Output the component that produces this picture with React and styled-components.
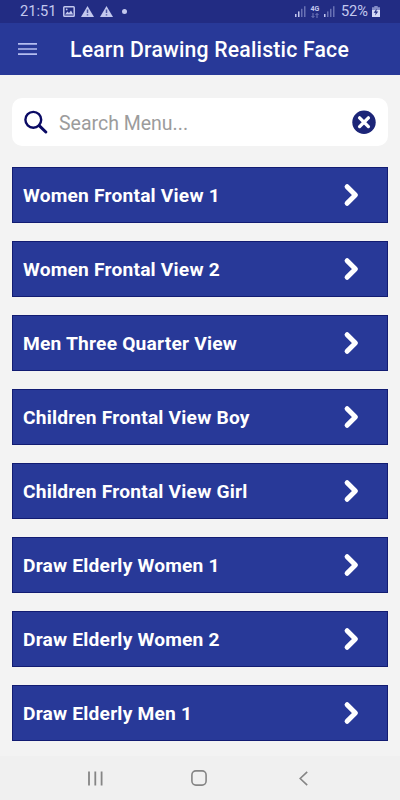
import React from "react";
import styled, { createGlobalStyle } from "styled-components";

const GlobalStyle = createGlobalStyle`
    * {
        box-sizing: border-box;
    }
    body {
        margin: 0;
        background: #f3f3f3;
        font-family: Roboto, "Liberation Sans", sans-serif;
    }
`

const Screen = styled.div`
    display: flex;
    flex-direction: column;
    width: 400px;
    height: 800px;
    overflow: hidden;
    background: #f3f3f3;
`

const StatusBar = styled.div`
    display: flex;
    align-items: center;
    justify-content: space-between;
    flex: none;
    height: 23px;
    padding: 0 20px 0 20px;
    background: #222c83;
    color: #c3c8ee;
`

const StatusGroup = styled.div`
    display: flex;
    align-items: center;
    svg {
        display: block;
    }
`

const StatusText = styled.span`
    font-size: 14.6px;
    line-height: 23px;
    margin-right: ${props => props.$gap};
`

const Header = styled.header`
    display: flex;
    align-items: center;
    flex: none;
    height: 52px;
    padding: 0 18px;
    background: #283998;
    svg {
        display: block;
        margin-top: -1px;
    }
`

const Title = styled.h1`
    margin: 2px 0 0 33px;
    color: #ffffff;
    font-size: 21.2px;
    font-weight: 500;
    letter-spacing: 0.21px;
    line-height: 52px;
    white-space: nowrap;
`

const Content = styled.main`
    display: flex;
    flex-direction: column;
    flex: 1;
    padding: 23px 12px 0;
`

const SearchBox = styled.div`
    display: flex;
    align-items: center;
    height: 48px;
    padding: 0 12px;
    border-radius: 10px;
    background: #ffffff;
    svg {
        display: block;
    }
`

const Placeholder = styled.span`
    flex: 1;
    margin: 4px 0 0 11px;
    color: #9c9c9c;
    font-size: 19.5px;
    line-height: 24px;
`

const MenuList = styled.div`
    display: flex;
    flex-direction: column;
    gap: 18px;
    margin-top: 21px;
`

const MenuItem = styled.div`
    display: flex;
    align-items: center;
    justify-content: space-between;
    height: 56px;
    padding: 0 27px 0 10px;
    border: 1px solid #121c72;
    background: #283998;
    color: #ffffff;
    font-size: 19.2px;
    font-weight: 700;
    letter-spacing: 0.2px;
    line-height: 24px;
    white-space: nowrap;
`

const ItemLabel = styled.span`
    margin-top: 2px;
`

const NavBar = styled.nav`
    display: flex;
    align-items: center;
    flex: none;
    height: 44px;
    padding: 0 0 0 88px;
    background: #f0f0f0;
    svg {
        display: block;
    }
    svg + svg {
        margin-left: 88px;
    }
    svg:last-child {
        margin-left: 92px;
    }
`

const items = [
    "Women Frontal View 1",
    "Women Frontal View 2",
    "Men Three Quarter View",
    "Children Frontal View Boy",
    "Children Frontal View Girl",
    "Draw Elderly Women 1",
    "Draw Elderly Women 2",
    "Draw Elderly Men 1",
]

const NetworkIcon = styled.div`
    display: flex;
    flex-direction: column;
    align-items: center;
    width: 10px;
    margin: 0 4px;
    font-size: 7px;
    font-weight: 700;
    line-height: 7px;
`

const WarningSvg = styled.svg`
    margin-left: 6px;
`

const Dot = styled.span`
    width: 5px;
    height: 5px;
    margin-left: 9px;
    border-radius: 50%;
    background: #c3c8ee;
`

const SignalSvg = styled.svg`
    margin-right: ${props => props.$gap || "0"};
`

function PictureIcon() {
    return (
        <svg width="12" height="11" viewBox="0 0 12 11">
            <rect x="0.8" y="0.8" width="10.4" height="9.4" rx="0.8" fill="none" stroke="#c3c8ee" strokeWidth="1.5" />
            <path d="M2 8.6L4.4 5.4L6 7L8 4.4L10.2 8.6z" fill="#c3c8ee" />
            <circle cx="3.7" cy="3.4" r="0.9" fill="#c3c8ee" />
        </svg>
    )
}

function WarningIcon() {
    return (
        <WarningSvg width="13" height="11" viewBox="0 0 13 11">
            <path d="M6.5 0L13 11H0z" fill="#c3c8ee" />
            <path d="M6.5 3.6v3.4M6.5 8.2v1.4" stroke="#4b549f" strokeWidth="1.5" />
        </WarningSvg>
    )
}

function SignalIcon({ level, gap }) {
    return (
        <SignalSvg $gap={gap} width="11" height="11" viewBox="0 0 11 11">
            {[0, 1, 2, 3].map(i => (
                <rect
                    key={i}
                    x={i * 3}
                    y={8 - i * 2.6}
                    width="1.5"
                    height={3 + i * 2.6}
                    fill={i < level ? "#c3c8ee" : "#6871b4"}
                />
            ))}
        </SignalSvg>
    )
}

function BatteryIcon() {
    return (
        <svg width="8" height="11" viewBox="0 0 8 11">
            <path d="M2.3 0h3.4v1.2H8V4H0V1.2h2.3z" fill="#858dc8" />
            <path d="M0 4H8V11H0z" fill="#d5d9f6" />
            <path d="M4.8 2.6L1.7 6.7h2l-.6 2.8 3.2-4.1h-2z" fill="#222c83" />
        </svg>
    )
}

function MenuRow({ label }) {
    return (
        <MenuItem>
            <ItemLabel>{label}</ItemLabel>
            <svg width="18" height="24" viewBox="0 0 18 24">
                <path d="M5.1 3.7L13.4 12L5.1 20.3" fill="none" stroke="#fff" strokeWidth="5" strokeLinecap="round" strokeLinejoin="round" />
            </svg>
        </MenuItem>
    )
}

function App() {
    return (
        <>
            <GlobalStyle />
            <Screen>
                <StatusBar>
                    <StatusGroup>
                        <StatusText $gap="7px">21:51</StatusText>
                        <PictureIcon />
                        <WarningIcon />
                        <WarningIcon />
                        <Dot />
                    </StatusGroup>
                    <StatusGroup>
                        <SignalIcon level={2} />
                        <NetworkIcon>
                            <span>4G</span>
                            <svg width="8" height="5" viewBox="0 0 8 5">
                                <path d="M2 0v4.4M.5 3L2 4.5 3.5 3M6 5V.6M4.5 2L6 .5 7.5 2" fill="none" stroke="#7d85c2" strokeWidth="0.9" />
                            </svg>
                        </NetworkIcon>
                        <SignalIcon level={1} gap="6px" />
                        <StatusText $gap="4px">52%</StatusText>
                        <BatteryIcon />
                    </StatusGroup>
                </StatusBar>
                <Header>
                    <svg width="19" height="14" viewBox="0 0 19 14">
                        <path d="M0 1.8H19M0 7H19M0 12.2H19" stroke="#b4bdf0" strokeWidth="1.7" />
                    </svg>
                    <Title>Learn Drawing Realistic Face</Title>
                </Header>
                <Content>
                    <SearchBox>
                        <svg width="24" height="24" viewBox="0 0 24 24">
                            <circle cx="9.3" cy="9.8" r="7.9" fill="none" stroke="#0a0a64" strokeWidth="2.4" />
                            <path d="M15.2 15.7L21.8 22" stroke="#0a0a64" strokeWidth="3" strokeLinecap="round" />
                        </svg>
                        <Placeholder>Search Menu...</Placeholder>
                        <svg width="24" height="24" viewBox="0 0 24 24">
                            <circle cx="12" cy="12.2" r="11.7" fill="#1c2578" />
                            <path d="M7.6 7.8L16.4 16.6M16.4 7.8L7.6 16.6" stroke="#fff" strokeWidth="3.3" strokeLinecap="round" />
                        </svg>
                    </SearchBox>
                    <MenuList>
                        {items.map(label => <MenuRow key={label} label={label} />)}
                    </MenuList>
                </Content>
                <NavBar>
                    <svg width="15" height="15" viewBox="0 0 15 15">
                        <path d="M1 0.5V14.5M7.3 0.5V14.5M13.6 0.5V14.5" stroke="#858585" strokeWidth="1.8" />
                    </svg>
                    <svg width="16" height="16" viewBox="0 0 16 16">
                        <rect x="0.9" y="0.9" width="14.2" height="14.2" rx="4" fill="none" stroke="#858585" strokeWidth="1.6" />
                    </svg>
                    <svg width="9" height="15" viewBox="0 0 9 15">
                        <path d="M8.2 0.8L1.2 7.5L8.2 14.2" fill="none" stroke="#858585" strokeWidth="1.6" />
                    </svg>
                </NavBar>
            </Screen>
        </>
    )
}

export default App;
